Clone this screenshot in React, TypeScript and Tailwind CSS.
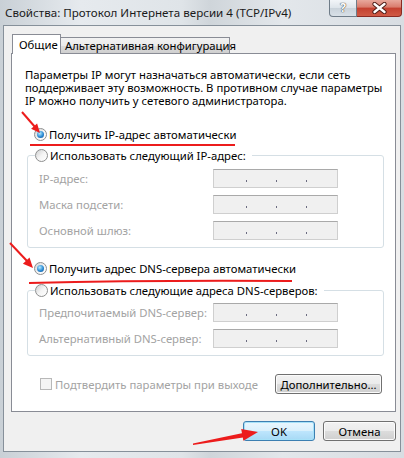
const font = "font-['Noto_Sans',sans-serif]";

function Radio({ checked }: { checked?: boolean }) {
  return (
    <span className="w-[13px] h-[13px] shrink-0 rounded-full border border-[#8e8f8f] bg-linear-to-br from-[#cfd0d1] via-[#f4f4f4] to-[#ffffff] flex items-center justify-center">
      {checked && (
        <span className="w-[7px] h-[7px] rounded-full bg-[radial-gradient(circle_at_40%_35%,#b6ecff,#2a8ad4_55%,#0c4a8a)]" />
      )}
    </span>
  );
}

function IpField() {
  return (
    <div className="w-[125px] h-[19px] border border-[#cfcfcf] border-t-[#a9a9a9] bg-[#f0f0f0] flex items-end pb-[5px] pl-[32px] gap-[29px]">
      {[0, 1, 2].map((i) => (
        <span key={i} className="w-[1px] h-[2px] bg-[#6b6b80]" />
      ))}
    </div>
  );
}

function Row({ label }: { label: string }) {
  return (
    <div className="flex items-center">
      <span className="w-[174px] text-[#a3a3a3] leading-[13px]">{label}</span>
      <IpField />
    </div>
  );
}

function Group({ title, rows, gapTop }: { title: string; rows: string[]; gapTop: string }) {
  return (
    <div className="ml-[15px] mr-[11px] border border-[#d5dfe5] rounded-[3px] pb-[7px]">
      <div className="-mt-[7px] ml-[7px] flex w-fit items-center gap-[2px] bg-white pr-[6px] h-[13px]">
        <Radio />
        <span className="leading-[13px]">{title}</span>
      </div>
      <div className={`${gapTop} pl-[11px] flex flex-col gap-[7px]`}>
        {rows.map((r) => (
          <Row key={r} label={r} />
        ))}
      </div>
    </div>
  );
}

function Button({ children, w, focused }: { children: string; w: string; focused?: boolean }) {
  return (
    <div
      className={`${w} h-[20px] rounded-[3px] border flex items-center justify-center leading-[13px] ${
        focused
          ? "border-[#3c7fb1] shadow-[inset_0_0_0_1px_#a6e1f8] bg-[linear-gradient(#eaf6fd,#d9f0fc_50%,#bee6fd_50%,#a7d9f5)]"
          : "border-[#707070] shadow-[inset_0_0_0_1px_#fbfbfb] bg-[linear-gradient(#f2f2f2,#ebebeb_50%,#dddddd_50%,#cfcfcf)]"
      }`}
    >
      {children}
    </div>
  );
}

export default function App() {
  return (
    <div className={`${font} text-[11.3px] text-black whitespace-nowrap relative w-[404px] h-[458px] overflow-hidden bg-[linear-gradient(90deg,#c9d0d6,#e6eaee_20%,#dfe4e8_45%,#cfd5da_52%,#e3e7eb_70%,#d8dde2)]`}>
      {/* title bar */}
      <div className="h-[25px] flex items-start justify-between">
        <span className="pl-[5px] pt-[5px] leading-[15px] text-[#1b1b1b] text-[11.6px]">
          Свойства: Протокол Интернета версии 4 (TCP/IPv4)
        </span>
        <div className="flex mr-[2px]">
          <div className="w-[28px] h-[17px] rounded-bl-[4px] border border-t-0 border-[#6f7c88] bg-[linear-gradient(#f2f5f8,#dde4ea_50%,#c9d2da_50%,#d8e0e7)] flex items-center justify-center text-[12px] font-bold text-white [text-shadow:0_0_1px_#333,0_0_1px_#333]">
            ?
          </div>
          <div className="w-[45px] h-[17px] rounded-br-[4px] border border-l-0 border-t-0 border-[#8a2a22] bg-[linear-gradient(#e8a89c,#d97b6c_45%,#c4402f_50%,#d05a45)] flex items-center justify-center">
            <svg width="15" height="12" viewBox="0 0 15 12">
              <path d="M2.5 2 L12.5 10 M12.5 2 L2.5 10" stroke="#4a1a14" strokeWidth="4.2" strokeLinecap="round" />
              <path d="M2.5 2 L12.5 10 M12.5 2 L2.5 10" stroke="#ffffff" strokeWidth="2.4" strokeLinecap="round" />
            </svg>
          </div>
        </div>
      </div>

      {/* client area */}
      <div className="mx-[3px] w-[398px] h-[427px] border border-[#86909a] bg-[#f0f0f0] pt-[8px] pl-[7px]">
        {/* tabs */}
        <div className="flex items-end h-[19px] ml-[1px]">
          <div className="relative z-10 w-[49px] h-[20px] -mb-[1px] bg-white border border-b-0 border-[#898c95] pl-[6px] pt-[2px] leading-[15px]">
            Общие
          </div>
          <div className="w-[169px] h-[16px] border border-l-0 border-b-0 border-[#898c95] bg-[linear-gradient(#f2f2f2,#ebebeb_50%,#dddddd_50%,#cfcfcf)] pl-[4px] leading-[15px]">
            Альтернативная конфигурация
          </div>
        </div>

        {/* panel */}
        <div className="w-[385px] h-[359px] bg-white border border-[#898c95] flex flex-col">
          <p className="pl-[13px] pt-[14px] leading-[13px]">
            Параметры IP могут назначаться автоматически, если сеть
            <br />
            поддерживает эту возможность. В противном случае параметры
            <br />
            IP можно получить у сетевого администратора.
          </p>

          <div className="mt-[21px] ml-[22px] flex items-center gap-[2px] h-[13px]">
            <Radio checked />
            <span className="leading-[13px]">Получить IP-адрес автоматически</span>
          </div>

          <div className="mt-[14px]">
            <Group
              title="Использовать следующий IP-адрес:"
              rows={["IP-адрес:", "Маска подсети:", "Основной шлюз:"]}
              gapTop="mt-[7px]"
            />
          </div>

          <div className="mt-[14px] ml-[22px] flex items-center gap-[2px] h-[13px]">
            <Radio checked />
            <span className="leading-[13px]">Получить адрес DNS-сервера автоматически</span>
          </div>

          <div className="mt-[15px]">
            <Group
              title="Использовать следующие адреса DNS-серверов:"
              rows={["Предпочитаемый DNS-сервер:", "Альтернативный DNS-сервер:"]}
              gapTop="mt-[6px]"
            />
          </div>

          <div className="mt-[18px] ml-[28px] mr-[13px] flex items-center justify-between">
            <div className="flex items-center gap-[3px]">
              <span className="w-[12px] h-[12px] border border-[#b8b8b8] bg-[#f4f4f4]" />
              <span className="text-[#a3a3a3] leading-[13px]">Подтвердить параметры при выходе</span>
            </div>
            <Button w="w-[107px]">Дополнительно...</Button>
          </div>
        </div>

        {/* dialog buttons */}
        <div className="mt-[9px] w-[385px] flex justify-end gap-[8px]">
          <Button w="w-[72px]" focused>
            OK
          </Button>
          <Button w="w-[73px]">Отмена</Button>
        </div>
      </div>

      {/* red annotations */}
      <svg className="absolute inset-0 pointer-events-none" width="404" height="458" viewBox="0 0 404 458">
        <line x1="22" y1="112" x2="35" y2="127" stroke="#ec1c1c" strokeWidth="2" />
        <polygon points="40,133 31.1,128.8 37.1,123.6" fill="#ec1c1c" />
        <line x1="30" y1="145" x2="235" y2="145" stroke="#ec1c1c" strokeWidth="2" />

        <line x1="10" y1="243" x2="27" y2="261" stroke="#ec1c1c" strokeWidth="2" />
        <polygon points="33,268 22.9,263.7 29.5,257.5" fill="#ec1c1c" />
        <path d="M29 283 Q150 280 292 281" stroke="#ec1c1c" strokeWidth="2" fill="none" />

        <polygon points="193,443.5 193,445 243,437.5 243,433" fill="#ec1c1c" />
        <polygon points="258,432 243.4,440.8 241.2,429" fill="#ec1c1c" />
      </svg>
    </div>
  );
}
